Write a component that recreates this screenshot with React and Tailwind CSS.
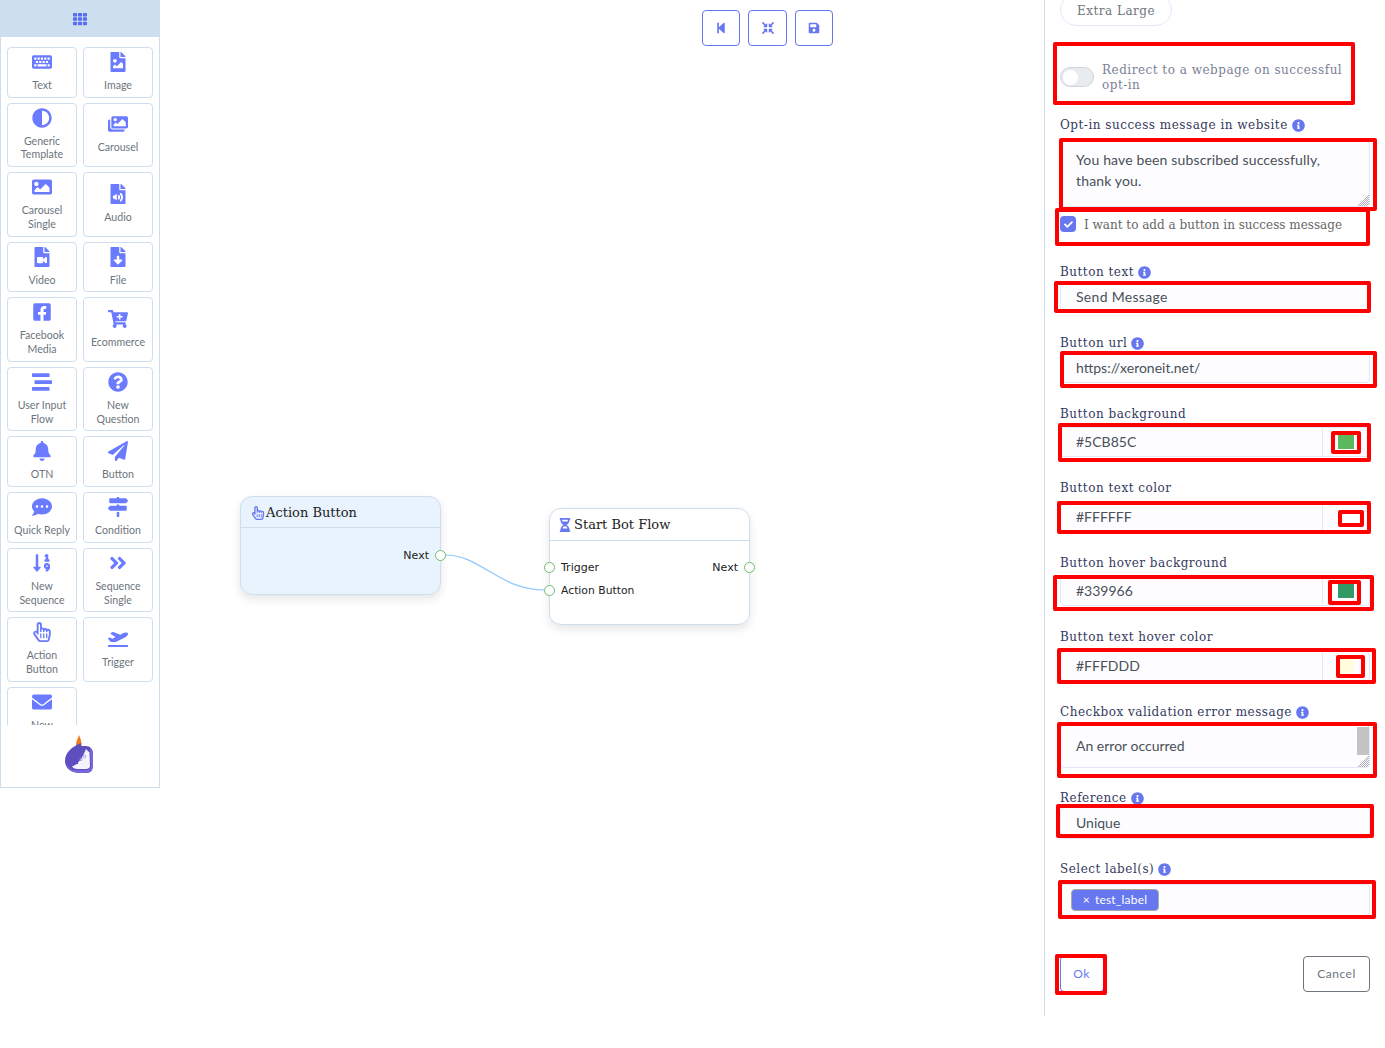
import {
  FaAdjust,
  FaAngleDoubleRight,
  FaBell,
  FaCartPlus,
  FaCheck,
  FaCommentDots,
  FaCompressArrowsAlt,
  FaEnvelope,
  FaFacebookSquare,
  FaFileAudio,
  FaFileDownload,
  FaFileImage,
  FaFileVideo,
  FaHourglassHalf,
  FaImage,
  FaImages,
  FaInfoCircle,
  FaKeyboard,
  FaMapSigns,
  FaPaperPlane,
  FaPlaneDeparture,
  FaQuestionCircle,
  FaRegHandPointer,
  FaSave,
  FaSortNumericDown,
  FaStepBackward,
  FaStream,
  FaTh,
} from "react-icons/fa";

const BLOCKS = [
  { icon: FaKeyboard, label: "Text" },
  { icon: FaFileImage, label: "Image" },
  { icon: FaAdjust, label: "Generic Template" },
  { icon: FaImages, label: "Carousel" },
  { icon: FaImage, label: "Carousel Single" },
  { icon: FaFileAudio, label: "Audio" },
  { icon: FaFileVideo, label: "Video" },
  { icon: FaFileDownload, label: "File" },
  { icon: FaFacebookSquare, label: "Facebook Media" },
  { icon: FaCartPlus, label: "Ecommerce" },
  { icon: FaStream, label: "User Input Flow" },
  { icon: FaQuestionCircle, label: "New Question" },
  { icon: FaBell, label: "OTN" },
  { icon: FaPaperPlane, label: "Button" },
  { icon: FaCommentDots, label: "Quick Reply" },
  { icon: FaMapSigns, label: "Condition" },
  { icon: FaSortNumericDown, label: "New Sequence" },
  { icon: FaAngleDoubleRight, label: "Sequence Single" },
  { icon: FaRegHandPointer, label: "Action Button" },
  { icon: FaPlaneDeparture, label: "Trigger" },
  { icon: FaEnvelope, label: "New" },
];

// annotation rectangles that sit on top of the form, in panel coordinates
const RED_BOXES = [
  "left-[8px] top-[42px] w-[302px] h-[63px]",
  "left-[14px] top-[138px] w-[318px] h-[73px]",
  "left-[10px] top-[208px] w-[315px] h-[38px]",
  "left-[9px] top-[281px] w-[317px] h-[32px]",
  "left-[15px] top-[351px] w-[317px] h-[37px]",
  "left-[13px] top-[423px] w-[313px] h-[39px]",
  "left-[286px] top-[431px] w-[30px] h-[23px]",
  "left-[12px] top-[501px] w-[314px] h-[33px]",
  "left-[293px] top-[510px] w-[26px] h-[17px]",
  "left-[8px] top-[575px] w-[321px] h-[36px]",
  "left-[283px] top-[580px] w-[33px] h-[25px]",
  "left-[12px] top-[648px] w-[319px] h-[36px]",
  "left-[291px] top-[655px] w-[29px] h-[23px]",
  "left-[12px] top-[722px] w-[320px] h-[56px]",
  "left-[11px] top-[804px] w-[318px] h-[34px]",
  "left-[13px] top-[880px] w-[318px] h-[39px]",
  "left-[10px] top-[954px] w-[52px] h-[41px]",
];

const labelCls =
  "flex h-[18px] items-center gap-[4px] pt-[2px] font-['DejaVu_Serif',serif] text-[12px] tracking-[0.5px] text-[#34395e]";
const controlCls =
  "block w-full rounded-[4px] border border-[#e4e6fc] bg-[#fdfdff] px-[15px] font-['Lato',sans-serif] text-[14px] text-[#495057] outline-none";

function FieldLabel({ text, info, className }) {
  return (
    <div className={`${labelCls} ${className}`}>
      {text}
      {info && <FaInfoCircle className="text-[13px] text-[#6777ef]" />}
    </div>
  );
}

function ColorInput({ value, swatch, className }) {
  return (
    <div className={`flex h-[30px] rounded-[4px] border border-[#e4e6fc] bg-[#fdfdff] ${className}`}>
      <input
        readOnly
        value={value}
        className="min-w-0 flex-1 bg-transparent px-[15px] pb-[2px] font-['Lato',sans-serif] text-[14px] text-[#495057] outline-none"
      />
      <div className="flex w-[47px] items-center border-l border-[#e4e6fc] pl-[15px]">
        <div className={`h-[14px] w-[16px] ${swatch}`} />
      </div>
    </div>
  );
}

// textarea corner hatching
function Grip() {
  return (
    <svg className="pointer-events-none absolute bottom-[1px] right-[1px]" width="11" height="11" viewBox="0 0 11 11" stroke="#999" strokeWidth="0.8" aria-hidden="true">
      <path d="M11 0 L0 11 M11 2 L2 11 M11 4 L4 11 M11 6 L6 11 M11 8 L8 11" />
    </svg>
  );
}

function Logo() {
  return (
    <svg className="mb-[4px]" width="40" height="48" viewBox="0 0 40 48" aria-hidden="true">
      <path d="M16.5 18 C15 12 18 9 19 5 C20.5 9 22 12 21.5 16 Z" fill="#f07a1a" />
      <path d="M21 13 C12 17 5 22 5 31 C5 39 12 43 20 43 L26 43 C31 43 33 40 33 35 L33 24 C33 19 30 16 26 16 L21 16 Z" fill="#5d4fc0" />
      <path d="M5.5 33 C7 39 13 43 20 43 L26 43 C31 43 33 40 33 35 L33 24 C33 21 32 19 30 17.5 L31 36 C31 39 28 40 25 40 L15 40 C11 40 8 37 5.5 33 Z" fill="#7469d6" />
      <path d="M26 19 L29.5 22.5 L30 36 C30 38 28 39 26 39 L17 39 C15 39 13 38 12 36.5 C18 35 23 27 26 19 Z" fill="#f5f4fc" />
      <circle cx="17" cy="33" r="1.2" fill="#5d4fc0" />
      <circle cx="21" cy="29.5" r="1.2" fill="none" stroke="#8d84d0" strokeWidth="0.7" />
      <circle cx="24.5" cy="26.5" r="1.4" fill="none" stroke="#8d84d0" strokeWidth="0.7" />
    </svg>
  );
}

function Sidebar() {
  return (
    <aside className="flex h-[788px] w-[160px] shrink-0 flex-col border-x border-b border-[#cddfee] bg-white">
      <div className="-mx-px flex h-[37px] shrink-0 items-center justify-center bg-[#cddfee]">
        <FaTh className="text-[14px] text-[#5a6cf0]" />
      </div>
      <div className="h-[688px] overflow-hidden px-[6px] pt-[9.75px]">
        <div className="grid grid-cols-2 gap-x-[6px] gap-y-[5px]">
          {BLOCKS.map(({ icon: Icon, label }) => (
            <div
              key={label}
              className="flex flex-col items-center justify-center rounded-[4px] border border-[#cddfee] px-[4px] pb-[4px] pt-[4px] text-center font-['Lato',sans-serif] text-[10.6px] leading-[13.75px] text-[#6c757d]"
            >
              <Icon className="mb-[7px] h-[20px] text-[20px] text-[#6a7bff]" />
              {label}
            </div>
          ))}
        </div>
      </div>
      <div className="flex flex-1 items-center justify-center">
        <Logo />
      </div>
    </aside>
  );
}

function Socket({ className }) {
  return (
    <span className={`absolute h-[11px] w-[11px] rounded-full border-[1.5px] border-[#72bb6f] bg-white ${className}`} />
  );
}

function Canvas() {
  return (
    <main className="relative flex-1">
      <div className="ml-[542px] mt-[10px] flex gap-[8px]">
        <button className="flex h-[36px] w-[38px] items-center justify-center rounded-[4px] border border-[#6777ef] text-[12px] text-[#6777ef]">
          <FaStepBackward />
        </button>
        <button className="flex h-[36px] w-[39px] items-center justify-center rounded-[4px] border border-[#6777ef] text-[12px] text-[#6777ef]">
          <FaCompressArrowsAlt />
        </button>
        <button className="flex h-[36px] w-[38px] items-center justify-center rounded-[4px] border border-[#6777ef] text-[12px] text-[#6777ef]">
          <FaSave />
        </button>
      </div>

      <div className="absolute left-[80px] top-[496px] h-[99px] w-[201px] rounded-[12px] border border-[#cddfee] bg-[#e8f3fd] shadow-[0_4px_10px_rgba(0,0,0,0.1)]">
        <div className="flex h-[31px] items-center gap-[1px] border-b border-[#cddfee] pl-[10px] pt-[2px] font-['DejaVu_Serif',serif] text-[13px] text-[#222]">
          <FaRegHandPointer className="text-[14px] text-[#6777ef]" />
          Action Button
        </div>
        <span className="absolute right-[11px] top-[52px] font-['DejaVu_Sans',sans-serif] text-[11px] leading-[13px] text-[#222]">Next</span>
        <Socket className="right-[-6px] top-[53px]" />
      </div>

      <svg className="absolute left-[280px] top-[545px]" width="110" height="55" viewBox="0 0 110 55" fill="none" aria-hidden="true">
        <path d="M6 10 C40 10 60 45 104 45" stroke="#8cc8ff" strokeWidth="1.2" />
      </svg>

      <div className="absolute left-[389px] top-[508px] h-[117px] w-[201px] rounded-[12px] border border-[#cddfee] bg-white shadow-[0_4px_10px_rgba(0,0,0,0.1)]">
        <div className="flex h-[32px] items-center gap-[2px] border-b border-[#cddfee] pl-[8px] font-['DejaVu_Serif',serif] text-[13px] text-[#222]">
          <FaHourglassHalf className="text-[14px] text-[#6777ef]" />
          Start Bot Flow
        </div>
        <span className="absolute left-[11px] top-[52px] font-['DejaVu_Sans',sans-serif] text-[11px] leading-[13px] text-[#222]">Trigger</span>
        <span className="absolute left-[11px] top-[75px] font-['DejaVu_Sans',sans-serif] text-[10.8px] leading-[13px] text-[#222]">Action Button</span>
        <span className="absolute right-[11px] top-[52px] font-['DejaVu_Sans',sans-serif] text-[11px] leading-[13px] text-[#222]">Next</span>
        <Socket className="left-[-6px] top-[53px]" />
        <Socket className="left-[-6px] top-[76px]" />
        <Socket className="right-[-6px] top-[53px]" />
      </div>
    </main>
  );
}

function SettingsPanel() {
  return (
    <section className="relative h-[1016px] w-[341px] shrink-0 overflow-hidden border-l border-[#cddfee] px-[15px]">
      <div className="-mt-[6px] flex h-[32px] w-[112px] items-center justify-center rounded-full border border-[#e4e6fc] pt-[1px] font-['DejaVu_Serif',serif] text-[12px] tracking-[0.5px] text-[#6c757d]">
        Extra Large
      </div>

      <div className="mt-[36px] flex h-[30px] items-center gap-[8px]">
        <div className="flex h-[20px] w-[34px] shrink-0 items-center rounded-full border border-[#ced4da] bg-[#e9ecef] pl-[2px]">
          <div className="h-[15px] w-[15px] rounded-full bg-white" />
        </div>
        <p className="mt-[2px] w-[250px] font-['DejaVu_Serif',serif] text-[12px] leading-[15px] tracking-[0.5px] text-[#7b7f96]">
          Redirect to a webpage on successful opt-in
        </p>
      </div>

      <FieldLabel text="Opt-in success message in website" info className="mt-[23px]" />
      <div className="relative mt-[8px]">
        <textarea
          readOnly
          defaultValue={"You have been subscribed successfully,\nthank you."}
          className={`${controlCls} h-[66px] resize-none pb-[8px] pt-[7px] leading-[21px] tracking-[0.15px]`}
        />
        <Grip />
      </div>

      <div className="mt-[9px] flex h-[18px] items-center gap-[8px]">
        <span className="mb-[2px] flex h-[16px] w-[16px] items-center justify-center rounded-[4px] bg-[#6777ef] text-[9px] text-white">
          <FaCheck />
        </span>
        <span className="font-['DejaVu_Serif',serif] text-[12px] text-[#666]">
          I want to add a button in success message
        </span>
      </div>

      <FieldLabel text="Button text" info className="mt-[28px]" />
      <input readOnly value="Send Message" className={`${controlCls} mt-[1px] h-[32px] pb-[2px] tracking-[0.3px]`} />

      <FieldLabel text="Button url" info className="mt-[20px]" />
      <input readOnly value="https://xeroneit.net/" className={`${controlCls} mt-[2px] h-[30px] pb-[2px]`} />

      <FieldLabel text="Button background" className="mt-[21px]" />
      <ColorInput value="#5CB85C" swatch="bg-[#5cb85c]" className="mt-[5px]" />

      <FieldLabel text="Button text color" className="mt-[21px]" />
      <ColorInput value="#FFFFFF" swatch="bg-white" className="mt-[6px]" />

      <FieldLabel text="Button hover background" className="mt-[21px]" />
      <ColorInput value="#339966" swatch="bg-[#339966]" className="mt-[5px]" />

      <FieldLabel text="Button text hover color" className="mt-[21px]" />
      <ColorInput value="#FFFDDD" swatch="bg-[#fffddd]" className="mt-[6px]" />

      <FieldLabel text="Checkbox validation error message" info className="mt-[21px]" />
      <div className="relative mt-[5px]">
        <textarea
          readOnly
          defaultValue="An error occurred"
          className={`${controlCls} h-[43px] resize-none pb-[10px] pt-[9px] leading-[21px]`}
        />
        <div className="absolute right-px top-[2px] h-[28px] w-[12px] bg-[#c4c4c4]" />
        <Grip />
      </div>

      <FieldLabel text="Reference" info className="mt-[20px]" />
      <input readOnly value="Unique" className={`${controlCls} mt-[1px] h-[32px] pb-[2px]`} />

      <FieldLabel text="Select label(s)" info className="mt-[20px]" />
      <div className="mt-[7px] flex h-[32px] items-center rounded-[4px] border border-[#e4e6fc] bg-[#fdfdff] pl-[10px]">
        <span className="flex h-[22px] w-[88px] items-center justify-center gap-[5px] rounded-[4px] border border-[#aaa] bg-[#6777ef] font-['Lato',sans-serif] text-[12px] tracking-[0.2px] text-white">
          <span>×</span>
          test_label
        </span>
      </div>

      <div className="mt-[40px] flex items-center justify-between">
        <button className="h-[36px] w-[44px] rounded-[4px] border border-[#6777ef] pr-[1px] font-['Lato',sans-serif] text-[12px] tracking-[0.5px] text-[#6777ef]">
          Ok
        </button>
        <button className="h-[36px] w-[67px] rounded-[4px] border border-[#6c757d] font-['Lato',sans-serif] text-[12px] tracking-[0.5px] text-[#6c757d]">
          Cancel
        </button>
      </div>

      {RED_BOXES.map((box) => (
        <div key={box} className={`pointer-events-none absolute rounded-[2px] border-[4px] border-[#ff0000] ${box}`} />
      ))}
    </section>
  );
}

export default function App() {
  return (
    <div className="flex h-[1048px] w-[1385px] overflow-hidden bg-white">
      <Sidebar />
      <Canvas />
      <SettingsPanel />
    </div>
  );
}
